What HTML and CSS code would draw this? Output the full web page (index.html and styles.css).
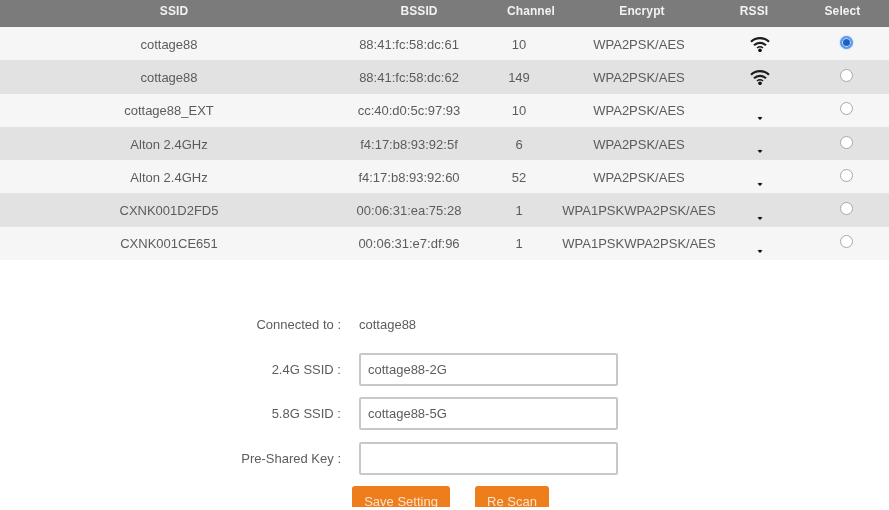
FILE: index.html
```html
<!DOCTYPE html>
<html lang="en">
<head>
<meta charset="utf-8">
<title>Wireless Scan</title>
<link rel="stylesheet" href="styles.css">
</head>
<body>
<svg class="defs" width="0" height="0" aria-hidden="true">
  <symbol id="wifi-full" viewBox="0 0 20 16">
    <path d="M1 5.800C6 1 14 1 19 5.800" fill="none" stroke="#1c1c1c" stroke-width="2.200"/>
    <path d="M4 9.200C7.500 6 12.500 6 16 9.200" fill="none" stroke="#1c1c1c" stroke-width="2.200"/>
    <path d="M7 12C8.700 10.600 11.300 10.600 13 12" fill="none" stroke="#1c1c1c" stroke-width="1.600"/>
    <circle cx="10" cy="14.300" r="1.800" fill="#111"/>
  </symbol>
  <symbol id="wifi-low" viewBox="0 0 20 16">
    <path d="M7.500 13.500L10 12.800L12.500 13.500L10 16Z" fill="#111"/>
  </symbol>
</svg>
<main class="page">
  <table class="scan scan-head">
    <colgroup>
      <col class="h-ssid"><col class="h-bssid"><col class="h-chan"><col class="h-enc"><col class="h-rssi"><col class="h-sel">
    </colgroup>
    <thead>
      <tr><th>SSID</th><th>BSSID</th><th>Channel</th><th>Encrypt</th><th>RSSI</th><th>Select</th></tr>
    </thead>
  </table>
  <table class="scan scan-body">
    <colgroup>
      <col class="c-ssid"><col class="c-bssid"><col class="c-chan"><col class="c-enc"><col class="c-rssi"><col class="c-sel">
    </colgroup>
    <tbody>
      <tr><td>cottage88</td><td>88:41:fc:58:dc:61</td><td>10</td><td>WPA2PSK/AES</td><td><svg class="wifi"><use href="#wifi-full"/></svg></td><td><input class="pick" type="radio" name="ap" checked></td></tr>
      <tr><td>cottage88</td><td>88:41:fc:58:dc:62</td><td>149</td><td>WPA2PSK/AES</td><td><svg class="wifi"><use href="#wifi-full"/></svg></td><td><input class="pick" type="radio" name="ap"></td></tr>
      <tr><td>cottage88_EXT</td><td>cc:40:d0:5c:97:93</td><td>10</td><td>WPA2PSK/AES</td><td><svg class="wifi low"><use href="#wifi-low"/></svg></td><td><input class="pick" type="radio" name="ap"></td></tr>
      <tr><td>Alton 2.4GHz</td><td>f4:17:b8:93:92:5f</td><td>6</td><td>WPA2PSK/AES</td><td><svg class="wifi low"><use href="#wifi-low"/></svg></td><td><input class="pick" type="radio" name="ap"></td></tr>
      <tr><td>Alton 2.4GHz</td><td>f4:17:b8:93:92:60</td><td>52</td><td>WPA2PSK/AES</td><td><svg class="wifi low"><use href="#wifi-low"/></svg></td><td><input class="pick" type="radio" name="ap"></td></tr>
      <tr><td>CXNK001D2FD5</td><td>00:06:31:ea:75:28</td><td>1</td><td>WPA1PSKWPA2PSK/AES</td><td><svg class="wifi low"><use href="#wifi-low"/></svg></td><td><input class="pick" type="radio" name="ap"></td></tr>
      <tr><td>CXNK001CE651</td><td>00:06:31:e7:df:96</td><td>1</td><td>WPA1PSKWPA2PSK/AES</td><td><svg class="wifi low"><use href="#wifi-low"/></svg></td><td><input class="pick" type="radio" name="ap"></td></tr>
    </tbody>
  </table>

  <form class="settings">
    <div class="row row-plain"><label>Connected to :</label><span>cottage88</span></div>
    <div class="row"><label for="s24">2.4G SSID :</label><input id="s24" class="field" type="text" value="cottage88-2G"></div>
    <div class="row"><label for="s58">5.8G SSID :</label><input id="s58" class="field" type="text" value="cottage88-5G"></div>
    <div class="row"><label for="psk">Pre-Shared Key :</label><input id="psk" class="field" type="password"></div>
    <div class="actions">
      <button class="btn btn-save" type="button">Save Setting</button>
      <button class="btn btn-scan" type="button">Re Scan</button>
    </div>
  </form>
</main>
</body>
</html>
```
FILE: styles.css
```css
html, body {
  margin: 0;
  height: 100%;
  background: #fff;
  overflow: hidden;
}
.defs { position: absolute; }
.page {
  height: 507px;
  overflow: hidden;
  font: 13px "Liberation Sans", Arial, sans-serif;
  color: #5c5c5c;
  filter: blur(0.5px);
}
.scan {
  width: 889px;
  table-layout: fixed;
  border-collapse: collapse;
}
.h-ssid { width: 348px; }
.h-bssid { width: 142px; }
.h-chan { width: 82px; }
.h-enc { width: 140px; }
.h-rssi { width: 84px; }
.h-sel { width: 93px; }
.c-ssid { width: 338px; }
.c-bssid { width: 142px; }
.c-chan { width: 78px; }
.c-enc { width: 162px; }
.c-rssi { width: 80px; }
.c-sel { width: 89px; }
.scan th {
  height: 27px;
  padding: 0 0 5px;
  box-sizing: border-box;
  background: #7b7b7b;
  color: #f2f2f2;
  font-size: 12px;
  font-weight: bold;
  letter-spacing: 0.1px;
  text-align: center;
}
.scan td {
  height: 33.3px;
  padding: 1px 0 0;
  box-sizing: border-box;
  text-align: center;
  vertical-align: middle;
}
.scan tbody tr:nth-child(odd) { background: #f6f6f6; }
.scan tbody tr:nth-child(even) { background: #e2e2e2; }
.wifi {
  display: block;
  width: 20px;
  height: 16px;
  margin: 0 auto;
}
.wifi.low { margin-top: 1px; margin-bottom: -1px; }
.pick {
  appearance: none;
  display: block;
  box-sizing: border-box;
  width: 13px;
  height: 13px;
  margin: -4px 0 0 40px;
  border: 1px solid #a8a8a8;
  border-radius: 50%;
  background: #fff;
}
.pick:checked {
  border: 2px solid #5b9bec;
  background: #1f5fc4;
  box-shadow: inset 0 0 0 1px #cfe0f7, 0 0 2px #8fbdf2;
}
.settings {
  display: flex;
  flex-direction: column;
  margin-top: 47.6px;
}
.row {
  display: flex;
  align-items: center;
  height: 33px;
  margin-bottom: 11.5px;
}
.row-plain {
  height: 34px;
  margin-bottom: 11px;
}
.row label {
  width: 341px;
  margin-right: 18px;
  text-align: right;
}
.field {
  box-sizing: border-box;
  width: 259px;
  height: 33px;
  padding: 0 7px;
  border: 2px solid #c8c8c8;
  border-radius: 2px;
  background: #fff;
  font: 13px "Liberation Sans", Arial, sans-serif;
  color: #5c5c5c;
  outline: none;
}
.actions {
  display: flex;
  gap: 25px;
  margin: 0 0 0 352px;
}
.btn {
  height: 31px;
  padding: 0;
  border: 0;
  border-radius: 3px;
  background: #ee7d1c;
  color: #fbe3cd;
  font: 13px "Liberation Sans", Arial, sans-serif;
}
.btn-save { width: 98px; }
.btn-scan { width: 74px; }
```
